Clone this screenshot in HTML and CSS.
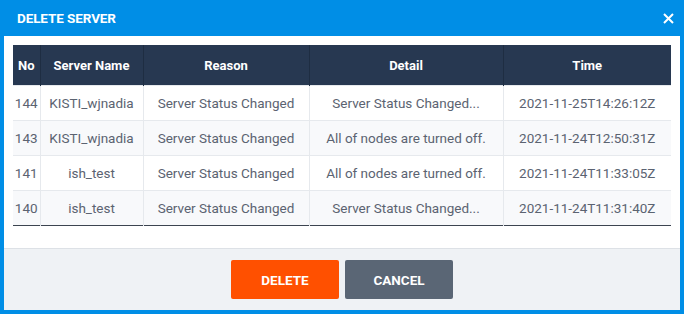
FILE: index.html
```html
<!DOCTYPE html>
<html>
<head>
<meta charset="utf-8">
<link rel="stylesheet" href="styles.css">
</head>
<body>
<div class="modal">
  <div class="modal-header">
    <span class="title">DELETE SERVER</span>
    <svg class="close" width="11" height="11" viewBox="0 0 11 11"><path d="M1 1L10 10M10 1L1 10" stroke="#fff" stroke-width="2" fill="none"/></svg>
  </div>
  <div class="modal-body">
    <table class="grid">
      <colgroup>
        <col style="width:27px"><col style="width:103px"><col style="width:166px"><col style="width:194px"><col style="width:168px">
      </colgroup>
      <thead>
        <tr><th>No</th><th>Server Name</th><th>Reason</th><th>Detail</th><th>Time</th></tr>
      </thead>
      <tbody>
        <tr><td>144</td><td>KISTI_wjnadia</td><td>Server Status Changed</td><td>Server Status Changed...</td><td>2021-11-25T14:26:12Z</td></tr>
        <tr><td>143</td><td>KISTI_wjnadia</td><td>Server Status Changed</td><td>All of nodes are turned off.</td><td>2021-11-24T12:50:31Z</td></tr>
        <tr><td>141</td><td>ish_test</td><td>Server Status Changed</td><td>All of nodes are turned off.</td><td>2021-11-24T11:33:05Z</td></tr>
        <tr><td>140</td><td>ish_test</td><td>Server Status Changed</td><td>Server Status Changed...</td><td>2021-11-24T11:31:40Z</td></tr>
      </tbody>
    </table>
  </div>
  <div class="modal-footer">
    <button class="btn btn-delete">DELETE</button>
    <button class="btn btn-cancel">CANCEL</button>
  </div>
</div>
</body>
</html>
```
FILE: styles.css
```css
html, body {
  margin: 0;
  padding: 0;
  background: #008ee6;
}
body {
  font-family: Roboto, "Liberation Sans", sans-serif;
}
.modal {
  width: 684px;
  height: 314px;
  box-sizing: border-box;
  background: #008ee6;
  padding: 0 4px 4px 4px;
  display: flex;
  flex-direction: column;
}
.modal-header {
  height: 36px;
  display: flex;
  align-items: center;
  justify-content: space-between;
  padding: 0 6px 0 13px;
}
.title {
  color: #fff;
  font-weight: 700;
  font-size: 13.5px;
  letter-spacing: -0.1px;
}
.close {
  display: block;
}
.modal-body {
  background: #fff;
  padding: 9px 9px 22px 9px;
}
.grid {
  width: 658px;
  border-collapse: collapse;
  table-layout: fixed;
  font-size: 13.5px;
  border-bottom: 1px solid #3c4450;
}
.grid th {
  background: #273851;
  color: #fff;
  font-weight: 700;
  font-size: 13px;
  height: 40px;
  padding: 0;
  border-left: 1px solid #1e2d42;
  text-align: center;
}
.grid th:first-child, .grid td:first-child {
  border-left: none;
}
.grid td {
  height: 34px;
  padding: 0;
  text-align: center;
  color: #5b6371;
  border-left: 1px solid #e6e9ed;
  border-top: 1px solid #e6e9ed;
  white-space: nowrap;
}
.grid tbody tr:nth-child(even) td {
  background: #f8f9fb;
}
.modal-footer {
  flex: 1;
  background: #eff2f5;
  border-top: 1px solid #dde1e6;
  display: flex;
  justify-content: center;
  align-items: flex-start;
  padding-top: 11px;
  gap: 6px;
}
.btn {
  width: 108px;
  height: 39px;
  border: none;
  border-radius: 2px;
  color: #fff;
  font-family: Roboto, "Liberation Sans", sans-serif;
  font-weight: 700;
  font-size: 13.5px;
  padding: 0;
}
.btn-delete {
  background: #ff5000;
}
.btn-cancel {
  background: #5a6675;
}
```
